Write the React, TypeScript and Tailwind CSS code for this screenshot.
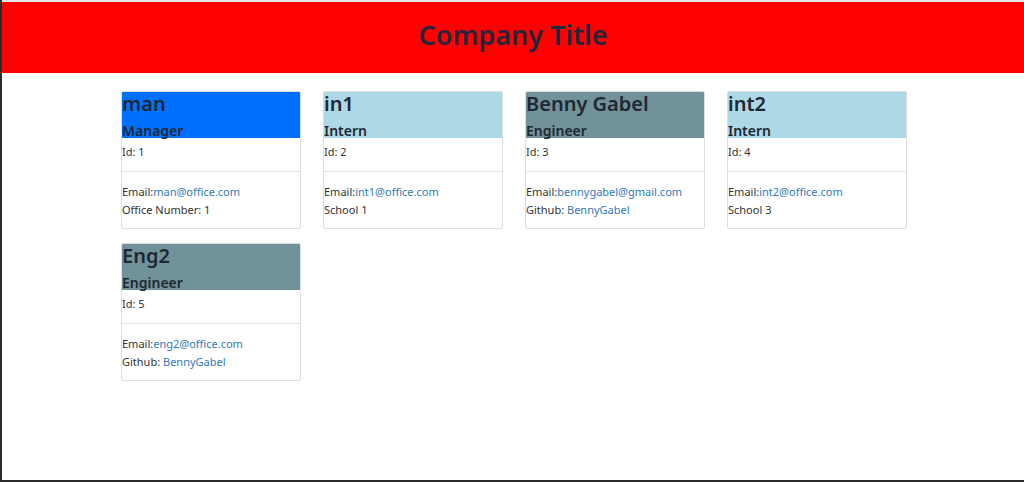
import React from "react";

type Member = {
  name: string;
  role: "Manager" | "Intern" | "Engineer";
  id: number;
  email: string;
  extraLabel: string;
  extraValue: string;
  extraLink?: boolean;
};

const team: Member[] = [
  { name: "man", role: "Manager", id: 1, email: "man@office.com", extraLabel: "Office Number: ", extraValue: "1" },
  { name: "in1", role: "Intern", id: 2, email: "int1@office.com", extraLabel: "School ", extraValue: "1" },
  { name: "Benny Gabel", role: "Engineer", id: 3, email: "bennygabel@gmail.com", extraLabel: "Github: ", extraValue: "BennyGabel", extraLink: true },
  { name: "int2", role: "Intern", id: 4, email: "int2@office.com", extraLabel: "School ", extraValue: "3" },
  { name: "Eng2", role: "Engineer", id: 5, email: "eng2@office.com", extraLabel: "Github: ", extraValue: "BennyGabel", extraLink: true },
];

const headerBg = {
  Manager: "bg-[#0070ff]",
  Intern: "bg-[#add8e6]",
  Engineer: "bg-[#72929a]",
};

const Card = ({ m }: { m: Member }) => (
  <div className="w-[180px] h-[138px] border border-[#dedede] rounded-[2px] bg-white overflow-hidden">
    {/* Card header */}
    <div className={`${headerBg[m.role]} h-[46px] text-[#1e2733] font-semibold`}>
      <h2 className="text-[20px] leading-[24px]">{m.name}</h2>
      <h3 className="text-[14px] leading-[15px] mt-[7px]">{m.role}</h3>
    </div>

    {/* Card body */}
    <ul className="text-[11px] text-[#333]">
      <li className="h-[34px] pt-[6px] leading-[15px] border-b border-[#e4e4e4]">Id: {m.id}</li>
      <li className="pt-[11px] leading-[18px]">
        <div>
          Email:<a href="#" className="text-[#337ab7]">{m.email}</a>
        </div>
        <div>
          {m.extraLabel}
          {m.extraLink ? (
            <a href="#" className="text-[#337ab7]">{m.extraValue}</a>
          ) : (
            m.extraValue
          )}
        </div>
      </li>
    </ul>
  </div>
);

const App = () => {
  return (
    <div
      className="h-[482px] w-[1024px] border-l-2 border-b-2 border-[#2b2b2b] bg-white overflow-hidden"
      style={{ fontFamily: '"Noto Sans", "Open Sans", sans-serif' }}
    >
      <div className="h-[2px] bg-[#e6e6e6]" />
      {/* Title bar */}
      <header className="bg-[#ff0000] h-[71px] flex items-center justify-center pb-[5px]">
        <h1 className="text-[27px] font-semibold text-[#25263a]">Company Title</h1>
      </header>

      {/* Team cards */}
      <main className="w-[786px] ml-[119px] mt-[18px] flex flex-wrap gap-x-[22px] gap-y-[14px]">
        {team.map((m) => (
          <Card key={m.id} m={m} />
        ))}
      </main>
    </div>
  );
};

export default App;
